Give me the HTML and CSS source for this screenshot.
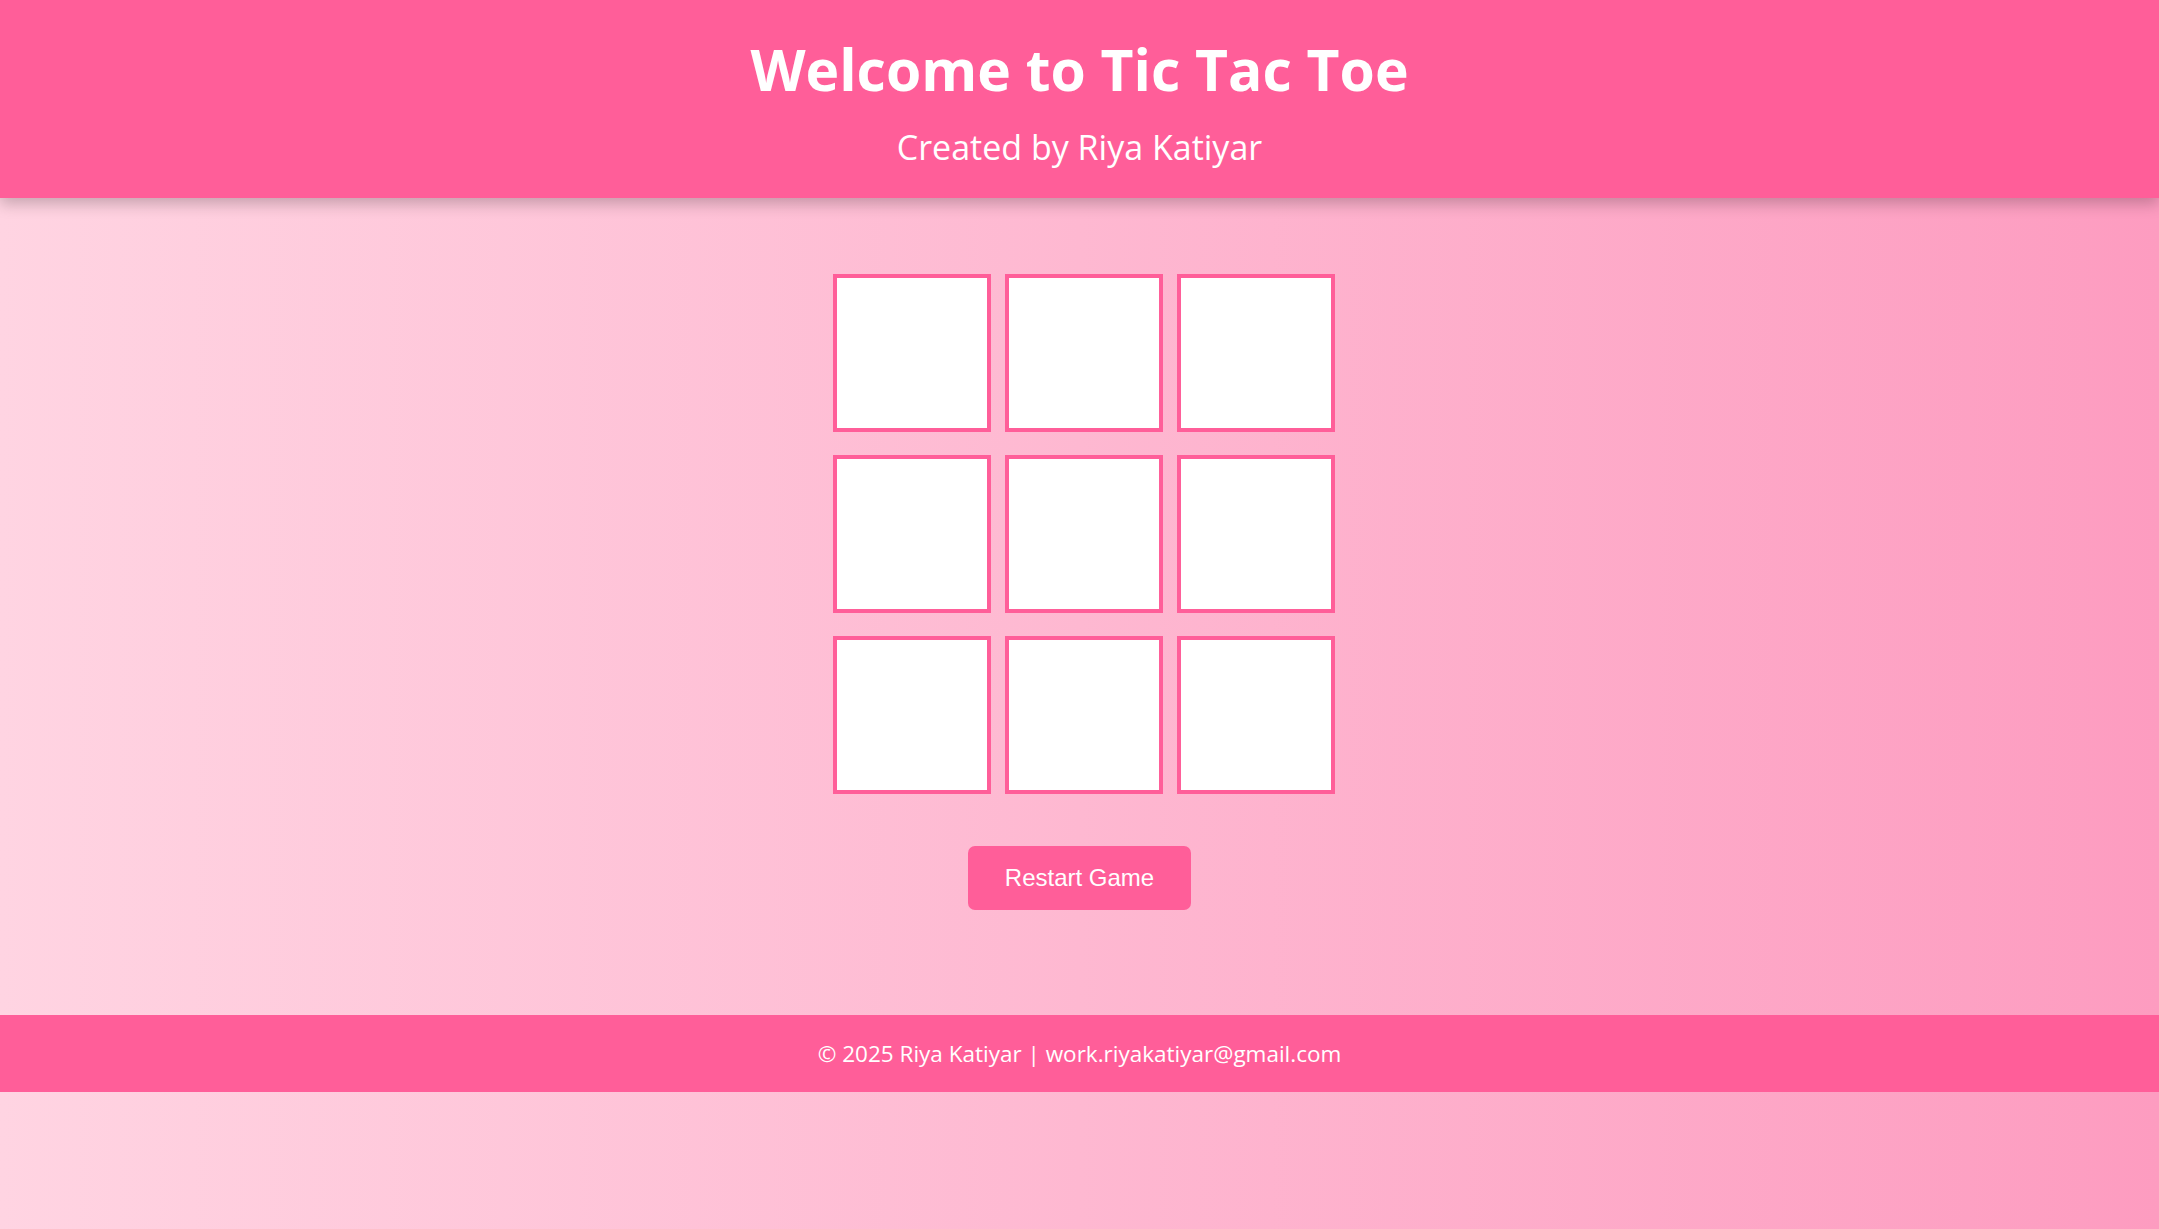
FILE: index.html
```html
<!DOCTYPE html>
<html lang="en">
<head>
<meta charset="utf-8">
<title>Tic Tac Toe</title>
<link rel="stylesheet" href="styles.css">
</head>
<body>
<header class="site-header">
  <h1 class="title">Welcome to Tic Tac Toe</h1>
  <p class="subtitle">Created by Riya Katiyar</p>
</header>
<main class="game">
  <div class="board">
    <button class="cell"></button>
    <button class="cell"></button>
    <button class="cell"></button>
    <button class="cell"></button>
    <button class="cell"></button>
    <button class="cell"></button>
    <button class="cell"></button>
    <button class="cell"></button>
    <button class="cell"></button>
  </div>
  <button class="restart">Restart Game</button>
</main>
<footer class="site-footer">© 2025 Riya Katiyar | work.riyakatiyar@gmail.com</footer>
</body>
</html>
```

FILE: styles.css
```css
html, body {
  margin: 0;
  padding: 0;
}
body {
  min-height: 100vh;
  background: linear-gradient(to right, #ffd4e2, #fd9cc0);
  font-family: "Open Sans", "Noto Sans", sans-serif;
  color: #ffffff;
}
.site-header {
  background: #ff5e99;
  text-align: center;
  padding: 33px 0 29px;
  box-shadow: 0 6px 14px rgba(0, 0, 0, 0.22);
  position: relative;
}
.title {
  margin: 0;
  font-size: 57px;
  line-height: 72px;
  font-weight: 700;
}
.subtitle {
  margin: 21px 0 0;
  font-size: 34px;
  line-height: 43px;
  font-weight: 400;
}
.game {
  display: flex;
  flex-direction: column;
  align-items: center;
  padding-top: 76px;
}
.board {
  display: grid;
  grid-template-columns: repeat(3, 158px);
  column-gap: 14px;
  row-gap: 23px;
  padding-left: 9px;
}
.cell {
  width: 158px;
  height: 158px;
  box-sizing: border-box;
  border: 4px solid #ff5e99;
  background: #ffffff;
  padding: 0;
  margin: 0;
}
.restart {
  margin-top: 52px;
  background: #ff5e99;
  color: #ffffff;
  border: none;
  border-radius: 7px;
  padding: 18px 37px;
  font-family: "Liberation Sans", Arial, sans-serif;
  font-size: 24px;
  line-height: 28px;
}
.site-footer {
  margin-top: 105px;
  background: #ff5e99;
  text-align: center;
  font-size: 22.5px;
  line-height: 29px;
  padding: 24px 0;
}
```
